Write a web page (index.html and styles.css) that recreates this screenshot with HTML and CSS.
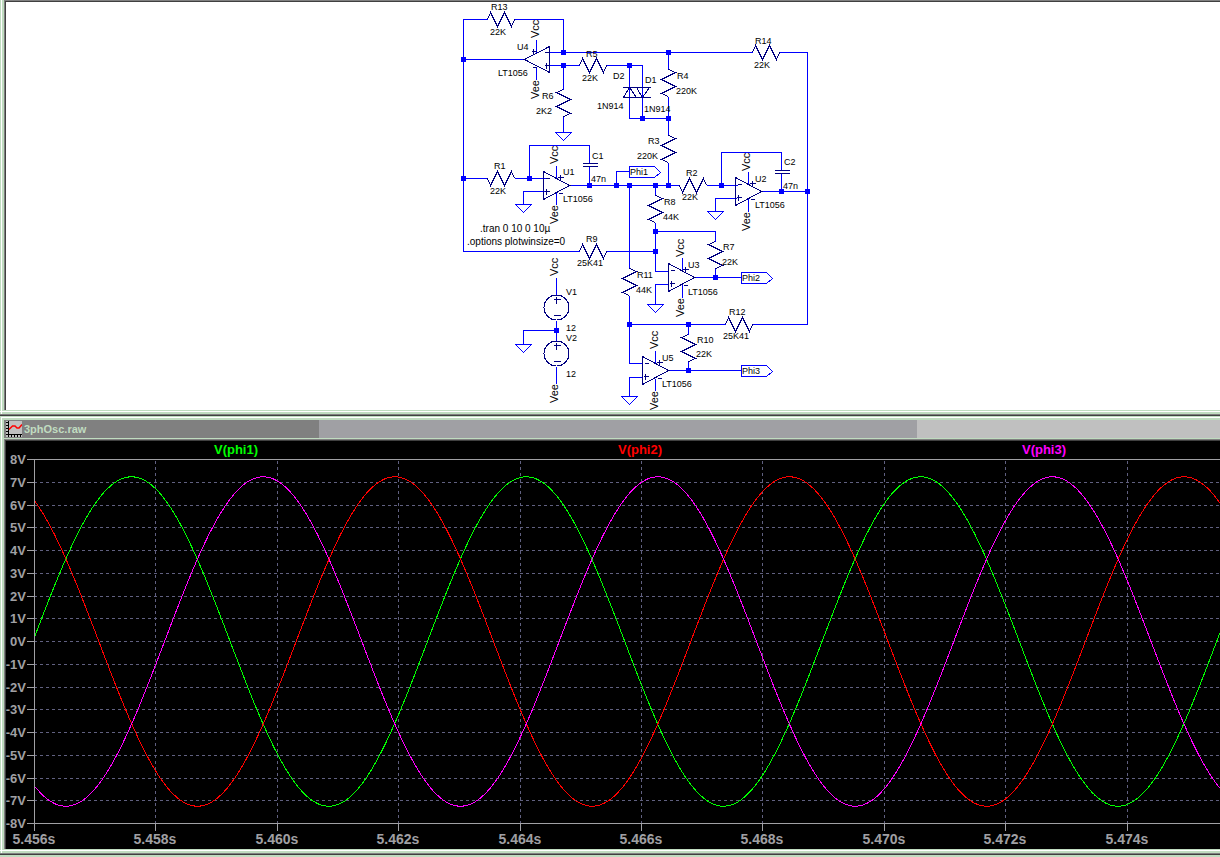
FILE: index.html
```html
<!DOCTYPE html>
<html lang="en">
<head>
<meta charset="utf-8">
<title>3phOsc</title>
<link rel="stylesheet" href="styles.css">
</head>
<body>
<main class="desktop">
<section class="window schematic-window" aria-label="Schematic">
<div class="pane">
<svg class="schematic" viewBox="6 2 1214 408" role="img" aria-label="Three-phase oscillator schematic">
<defs>
<path id="rh" d="M0 0l3-7 7 14 7-14 7 14 3-7"/>
<path id="rv" d="M0 0l7 3-14 7 14 7-14 7 7 3"/>
<path id="gnd" d="M-8 0H8L0 8Z"/>
<path id="dot" d="M-2.5-2.5h5v5h-5z"/>
<path id="flag" d="M0-6H25L31 0L25 5H0Z"/>
<g id="amp"><path d="M0-14V14L26 0ZM6 6H1M3 3V9M17-11V-5M14-8H20M15 8H19M2-7H6"/></g>
<path id="cap" d="M-7 0H8M-7 3H8"/>
<g id="source"><circle r="12.5"/><path d="M-3-8H4M0-11V-4M-3 8H4"/></g>
</defs>
<g transform="translate(.5 .5)">
<g class="wire">
<path d="M487 19H463V251H579M514 19H563V52M463 59H523M549 52H752M779 52H807V324H752M549 65H579M606 65H642V118M629 65V118H668M563 65V89M563 116V132"/>
<path d="M668 52V69M668 96V135M668 162V185M463 178H487M514 178H545M529 178V145H589V163M589 166V185M544 191H523V204M569 185H679M616 185V171H629M706 185H737M721 185V152H781V170M781 173V191M761 191H807M736 198H715V211"/>
<path d="M655 185V195M655 222V271H668M655 231H715V241M715 268V277M695 277H741M668 284H655V304M606 251H655M629 185V268M629 295V363H642M629 324H725M688 324V334M688 361V370M668 370H741M642 377H629V396"/>
<path d="M556 277V294M556 320V340M556 366V383M556 330H523V344M536 39V52M536 66V79M556 165V178M556 192V204M748 171V184M748 198V211M682 257V271M682 284V297M655 350V363M655 378V390"/>
<use href="#gnd" x="563" y="132"/><use href="#gnd" x="523" y="204"/><use href="#gnd" x="715" y="211"/><use href="#gnd" x="655" y="304"/><use href="#gnd" x="629" y="396"/><use href="#gnd" x="523" y="344"/>
<use href="#flag" x="629" y="172"/><use href="#flag" x="741" y="278"/><use href="#flag" x="741" y="371"/>
</g>
<g class="part">
<use href="#rh" x="487" y="19"/><use href="#rh" x="752" y="52"/><use href="#rh" x="579" y="65"/><use href="#rh" x="579" y="251"/><use href="#rh" x="725" y="324"/>
<use href="#rh" transform="translate(487 178) scale(1 -1)"/><use href="#rh" transform="translate(679 185) scale(1 -1)"/>
<use href="#rv" x="668" y="69"/><use href="#rv" x="668" y="135"/><use href="#rv" x="655" y="195"/><use href="#rv" x="629" y="268"/>
<use href="#rv" transform="translate(563 89) scale(-1 1)"/><use href="#rv" transform="translate(715 241) scale(-1 1)"/><use href="#rv" transform="translate(688 334) scale(-1 1)"/>
<use href="#amp" x="543" y="185"/><use href="#amp" x="735" y="191"/><use href="#amp" x="668" y="277"/><use href="#amp" x="642" y="370"/>
<path d="M549 46V72L524 59ZM544 52H549M544 65H549M546 62V68M533 48V54M531 51H536M532 67H536"/>
<path d="M622 87H650M622 97H650M629 87L623 97M629 87L636 97M642 97L636 87M642 97L649 87"/>
<use href="#cap" x="589" y="163"/><use href="#cap" x="781" y="170"/>
<use href="#source" x="556" y="307"/><use href="#source" x="556" y="353"/>
</g>
<g class="junction">
<use href="#dot" x="463" y="59"/><use href="#dot" x="463" y="178"/><use href="#dot" x="563" y="52"/><use href="#dot" x="563" y="65"/><use href="#dot" x="629" y="65"/><use href="#dot" x="668" y="52"/><use href="#dot" x="642" y="118"/><use href="#dot" x="668" y="118"/><use href="#dot" x="529" y="178"/><use href="#dot" x="589" y="185"/><use href="#dot" x="616" y="185"/><use href="#dot" x="629" y="185"/><use href="#dot" x="655" y="185"/><use href="#dot" x="668" y="185"/><use href="#dot" x="721" y="185"/><use href="#dot" x="781" y="191"/><use href="#dot" x="807" y="191"/><use href="#dot" x="655" y="231"/><use href="#dot" x="655" y="251"/><use href="#dot" x="715" y="277"/><use href="#dot" x="629" y="324"/><use href="#dot" x="688" y="324"/><use href="#dot" x="688" y="370"/><use href="#dot" x="556" y="330"/>
</g>
</g>
<g class="label">
<text x="491" y="10">R13</text><text x="490" y="35">22K</text>
<text x="517" y="50">U4</text><text x="498" y="76">LT1056</text>
<text x="586" y="57">R5</text><text x="582" y="81">22K</text>
<text x="542" y="99">R6</text><text x="536" y="114">2K2</text>
<text x="613" y="79">D2</text><text x="597" y="109">1N914</text>
<text x="645" y="83">D1</text><text x="644" y="112">1N914</text>
<text x="677" y="79">R4</text><text x="676" y="94">220K</text>
<text x="755" y="44">R14</text><text x="754" y="68">22K</text>
<text x="648" y="144">R3</text><text x="637" y="159">220K</text>
<text x="494" y="169">R1</text><text x="490" y="194">22K</text>
<text x="563" y="175">U1</text><text x="563" y="202">LT1056</text>
<text x="592" y="159">C1</text><text x="591" y="182">47n</text>
<text x="630" y="175">Phi1</text>
<text x="686" y="176">R2</text><text x="682" y="200">22K</text>
<text x="755" y="182">U2</text><text x="755" y="208">LT1056</text>
<text x="784" y="165">C2</text><text x="783" y="189">47n</text>
<text x="664" y="205">R8</text><text x="663" y="220">44K</text>
<text x="723" y="250">R7</text><text x="722" y="265">22K</text>
<text x="688" y="268">U3</text><text x="688" y="295">LT1056</text>
<text x="742" y="281">Phi2</text>
<text x="586" y="242">R9</text><text x="577" y="266">25K41</text>
<text x="637" y="278">R11</text><text x="636" y="293">44K</text>
<text x="566" y="295">V1</text><text x="566" y="331">12</text>
<text x="566" y="341">V2</text><text x="566" y="377">12</text>
<text x="729" y="315">R12</text><text x="723" y="339">25K41</text>
<text x="697" y="343">R10</text><text x="696" y="357">22K</text>
<text x="662" y="361">U5</text><text x="662" y="387">LT1056</text>
<text x="742" y="374">Phi3</text>
</g>
<g class="directive">
<text x="480" y="232">.tran 0 10 0 10µ</text><text x="467" y="245">.options plotwinsize=0</text>
</g>
<g class="supply">
<text transform="translate(539 38) rotate(-90)">Vcc</text><text transform="translate(539 99) rotate(-90)">Vee</text>
<text transform="translate(558 164) rotate(-90)">Vcc</text><text transform="translate(558 224) rotate(-90)">Vee</text>
<text transform="translate(750 171) rotate(-90)">Vcc</text><text transform="translate(750 231) rotate(-90)">Vee</text>
<text transform="translate(684 257) rotate(-90)">Vcc</text><text transform="translate(684 317) rotate(-90)">Vee</text>
<text transform="translate(658 349) rotate(-90)">Vcc</text><text transform="translate(658 410) rotate(-90)">Vee</text>
<text transform="translate(558 276) rotate(-90)">Vcc</text><text transform="translate(558 403) rotate(-90)">Vee</text>
</g>
</svg>
</div>
</section>
<section class="window plot-window" aria-label="Waveform viewer">
<header class="titlebar">
<svg class="title-icon" viewBox="0 0 16 16" aria-hidden="true"><path fill="#c0c0c0" d="M0 0h16v16H0z"/><path class="icon-axis" d="M2.500 0V14M2 13.500H16M0 1.500H2M0 4.500H2M0 7.500H2M0 10.500H2M0 13.500H2M2.500 14V16M5.500 14V16M8.500 14V16M11.500 14V16M14.500 14V16"/><path class="icon-trace" d="M3 8.500L6.500 5H9L11 7H13L16 3.500"/></svg>
<h1 class="title">3phOsc.raw</h1>
</header>
<div class="pane">
<svg class="plot" viewBox="6 441 1214 408" role="img" aria-label="Waveforms of V(phi1), V(phi2) and V(phi3)">
<g id="grid" class="grid"></g>
<g id="traces" class="traces"></g>
<path id="axes" class="axes"/>
<g id="scale" class="scale"></g>
<g class="legend">
<text class="phi1" x="236" y="454">V(phi1)</text>
<text class="phi2" x="640" y="454">V(phi2)</text>
<text class="phi3" x="1044" y="454">V(phi3)</text>
</g>
</svg>
</div>
</section>
</main>
<script src="plot.js"></script>
</body>
</html>
```
FILE: styles.css
```css
* { box-sizing: border-box; }
body {
  margin: 0;
  background: #c0dcc0;
  font-family: "Liberation Sans", Arial, sans-serif;
}
.desktop { display: flex; flex-direction: column; overflow: hidden; }
.window {
  padding: 0 0 4px 4px;
  border-bottom: 1px solid #404040;
  background:
    linear-gradient(#808080, #808080) 0 100% / 100% 1px no-repeat,
    linear-gradient(#fff, #fff) 1px 0 / 1px 100% no-repeat,
    linear-gradient(#fff, #fff) 0 calc(100% - 3px) / 100% 1px no-repeat,
    #c0dcc0;
}
.schematic-window { padding-bottom: 5px; }
.plot-window {
  padding: 4px 0 5px 4px;
  background:
    linear-gradient(#808080, #808080) 0 100% / 100% 1px no-repeat,
    linear-gradient(#fff, #fff) 1px 1px / 1px 100% no-repeat,
    linear-gradient(#fff, #fff) 1px 1px / 100% 1px no-repeat,
    linear-gradient(#fff, #fff) 0 calc(100% - 3px) / 100% 1px no-repeat,
    #c0dcc0;
}
.pane {
  padding: 1px 0 0 1px;
  border: solid #808080;
  border-width: 1px 0 0 1px;
  background: #404040;
}
.schematic, .plot { display: block; width: 100%; height: auto; }
.schematic { background: #fff; shape-rendering: crispEdges; }
.plot { background: #000; shape-rendering: crispEdges; }

.wire { fill: none; stroke: #0000ff; }
.part { fill: none; stroke: #000080; }
.junction { fill: #0000ff; }
.label { fill: #000; font-size: 9px; }
.directive { fill: #000; font-size: 10px; }
.supply { fill: #000; font-size: 11px; }

.titlebar {
  display: flex;
  align-items: center;
  gap: 2px;
  height: 18px;
  margin-bottom: 1px;
  padding-left: 2px;
  background: linear-gradient(90deg, #808080 25.9%, #a0a0a4 25.9% 75.1%, #c0c0c0 75.1%);
}
.title-icon { width: 16px; height: 16px; }
.icon-axis { fill: none; stroke: #000; shape-rendering: crispEdges; }
.icon-trace { fill: none; stroke: #f00; stroke-width: 1.5; }
.title { margin: 0; color: #c0dcc0; font-size: 11px; line-height: 18px; font-weight: bold; }

.grid { fill: none; stroke: #606080; stroke-dasharray: 3 3; }
.axes { fill: none; stroke: #a0a0a4; }
.scale { fill: #a0a0a4; font-weight: bold; }
.volts { font-size: 13px; text-anchor: end; }
.seconds { font-size: 14px; text-anchor: middle; }
.traces { fill: none; }
.legend { font-size: 13px; font-weight: bold; text-anchor: middle; }
.trace1 { stroke: #00ff00; }
.trace2 { stroke: #ff0000; }
.trace3 { stroke: #ff00ff; }
.phi1 { fill: #00ff00; }
.phi2 { fill: #ff0000; }
.phi3 { fill: #ff00ff; }
```
FILE: plot.js
```js
const NS = "http://www.w3.org/2000/svg";
const left = 34, right = 1220, top8 = 459, bottom8 = 823;
const center = (top8 + bottom8) / 2;

function add(parentId, tag, attrs, text) {
  const node = document.createElementNS(NS, tag);
  for (const key in attrs) node.setAttribute(key, attrs[key]);
  if (text) node.textContent = text;
  document.getElementById(parentId).appendChild(node);
}

let axes = `M27 ${top8 + 0.5}H${right}M27 ${bottom8 + 0.5}H${right}M${left + 0.5} ${top8}V831`;

for (let volts = 8; volts >= -8; volts--) {
  const y = Math.round(center - volts * (bottom8 - top8) / 16);
  if (Math.abs(volts) < 8) {
    add("grid", "path", { d: `M${left} ${y + 0.5}H${right}` });
    axes += `M27 ${y + 0.5}H${left}`;
  }
  add("scale", "text", { class: "volts", x: 26, y: y + 5 }, volts + "V");
}

for (let i = 0; i < 10; i++) {
  const x = Math.round(left + i * 121.4);
  if (i > 0) {
    add("grid", "path", { d: `M${x + 0.5} ${top8 + 2}V${bottom8}` });
    axes += `M${x + 0.5} ${bottom8}V831`;
  }
  add("scale", "text", { class: "seconds", x: x, y: 844 }, (5.456 + i * 0.002).toFixed(3) + "s");
}
document.getElementById("axes").setAttribute("d", axes);

const period = 394.6, amplitude = 164.7;
[["trace1", 131.5], ["trace2", 394.8], ["trace3", 263.2]].forEach(([name, peak]) => {
  const points = [];
  for (let x = left; x <= right; x++) {
    const y = center + 0.5 - amplitude * Math.cos((x - peak) / period * 2 * Math.PI);
    points.push(`${x},${y.toFixed(1)}`);
  }
  add("traces", "polyline", { class: name, points: points.join(" ") });
});
```
